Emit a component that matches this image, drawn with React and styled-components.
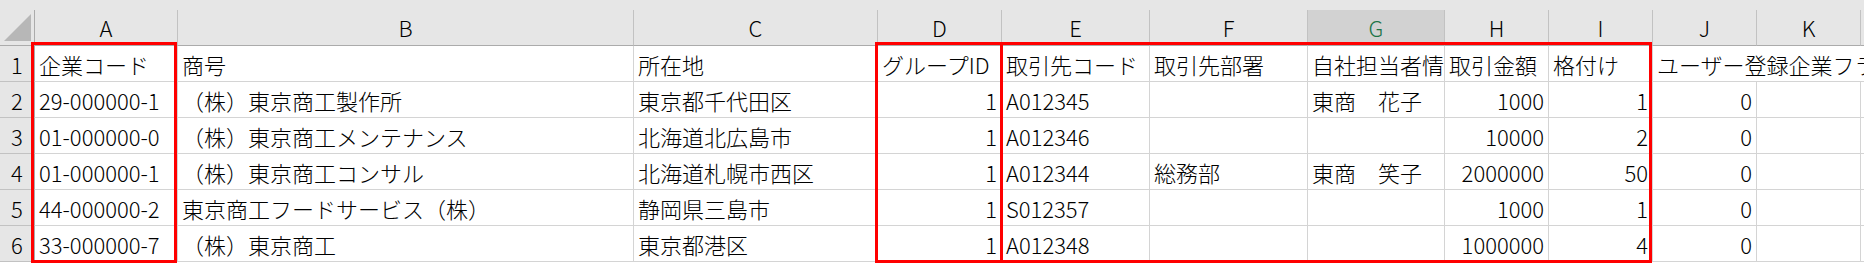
import React from "react";
import styled, { createGlobalStyle } from "styled-components";

const Global = createGlobalStyle`
  html, body { margin: 0; padding: 0; background: #ffffff; }
  body {
    font-family: "Noto Sans CJK JP", "Noto Sans", sans-serif;
    font-weight: 300;
    color: #000000;
    overflow: hidden;
  }
`;

const GRID = "#d4d4d4";
const HEAD_BG = "#e6e6e6";
const HEAD_LINE = "#c2c2c2";

const Page = styled.div`
  position: relative;
  width: 1864px;
  height: 265px;
  overflow: hidden;
  background: #ffffff;
`;

const TopStrip = styled.div`
  height: 10px;
  background: ${HEAD_BG};
`;

const Sheet = styled.div`
  display: grid;
  grid-template-columns: 35px 143px 456px 244px 124px 148px 158px 137px 104px 104px 104px 104px 1fr;
  grid-template-rows: 36px repeat(6, 36px);
`;

const Corner = styled.div`
  box-sizing: border-box;
  background: ${HEAD_BG};
  border-right: 1px solid #ababab;
  border-bottom: 1px solid #ababab;
  position: relative;
  svg { position: absolute; left: 4px; top: 4px; }
`;

const ColHead = styled.div`
  box-sizing: border-box;
  display: flex;
  align-items: center;
  justify-content: center;
  background: ${(p) => (p.$active ? "#d2d2d2" : HEAD_BG)};
  color: ${(p) => (p.$active ? "#217346" : "#000000")};
  border-right: 1px solid ${HEAD_LINE};
  border-bottom: 1px solid #ababab;
  font-size: 22px;
  line-height: 1;
  padding-bottom: 2px;
`;

const RowHead = styled.div`
  box-sizing: border-box;
  display: flex;
  align-items: center;
  justify-content: center;
  background: ${HEAD_BG};
  border-right: 1px solid #ababab;
  border-bottom: 1px solid ${HEAD_LINE};
  font-size: 22px;
  line-height: 1;
`;

const Cell = styled.div`
  box-sizing: border-box;
  display: flex;
  align-items: center;
  justify-content: ${(p) => (p.$num ? "flex-end" : "flex-start")};
  grid-column: ${(p) => (p.$span ? `span ${p.$span}` : "auto")};
  padding: 0 ${(p) => (p.$num ? "4px" : "0")} 0 ${(p) => (p.$num ? "0" : "4px")};
  border-right: 1px solid ${GRID};
  border-bottom: 1px solid ${GRID};
  font-size: 22px;
  line-height: 1;
  white-space: pre;
  overflow: hidden;
  min-width: 0;
`;

const Mark = styled.div`
  position: absolute;
  box-sizing: border-box;
  top: 42px;
  height: 221px;
  left: ${(p) => p.$left}px;
  width: ${(p) => p.$width}px;
  border: 3px solid #ff0000;
  pointer-events: none;
`;

const letters = ["A", "B", "C", "D", "E", "F", "G", "H", "I", "J", "K", ""];

// columns whose values are numbers (right aligned)
const numeric = [false, false, false, true, false, false, false, true, true, true, false, false];

const header = [
  "企業コード",
  "商号",
  "所在地",
  "グループID",
  "取引先コード",
  "取引先部署",
  "自社担当者情報",
  "取引金額",
  "格付け",
];

const rows = [
  ["29-000000-1", "（株）東京商工製作所", "東京都千代田区", "1", "A012345", "", "東商　花子", "1000", "1", "0", "", ""],
  ["01-000000-0", "（株）東京商工メンテナンス", "北海道北広島市", "1", "A012346", "", "", "10000", "2", "0", "", ""],
  ["01-000000-1", "（株）東京商工コンサル", "北海道札幌市西区", "1", "A012344", "総務部", "東商　笑子", "2000000", "50", "0", "", ""],
  ["44-000000-2", "東京商工フードサービス（株）", "静岡県三島市", "1", "S012357", "", "", "1000", "1", "0", "", ""],
  ["33-000000-7", "（株）東京商工", "東京都港区", "1", "A012348", "", "", "1000000", "4", "0", "", ""],
];

function CornerMark() {
  return (
    <svg width="28" height="28" viewBox="0 0 28 28">
      <polygon points="0,27 27,27 27,0" fill="#b7b7b7" />
    </svg>
  );
}

export default function App() {
  return (
    <>
      <Global />
      <Page>
        <TopStrip />
        <Sheet>
          <Corner>
            <CornerMark />
          </Corner>
          {letters.map((l, i) => (
            <ColHead key={`h${i}`} $active={l === "G"}>
              {l}
            </ColHead>
          ))}

          <RowHead>1</RowHead>
          {header.map((t, i) => (
            <Cell key={`r1c${i}`}>{t}</Cell>
          ))}
          <Cell $span={3}>ユーザー登録企業フラグ</Cell>

          {rows.map((r, ri) => (
            <React.Fragment key={`r${ri}`}>
              <RowHead>{ri + 2}</RowHead>
              {r.map((v, ci) => (
                <Cell key={`r${ri}c${ci}`} $num={numeric[ci]}>
                  {v}
                </Cell>
              ))}
            </React.Fragment>
          ))}
        </Sheet>

        <Mark $left={31} $width={146} />
        <Mark $left={875} $width={128} />
        <Mark $left={1000} $width={652} />
      </Page>
    </>
  );
}
